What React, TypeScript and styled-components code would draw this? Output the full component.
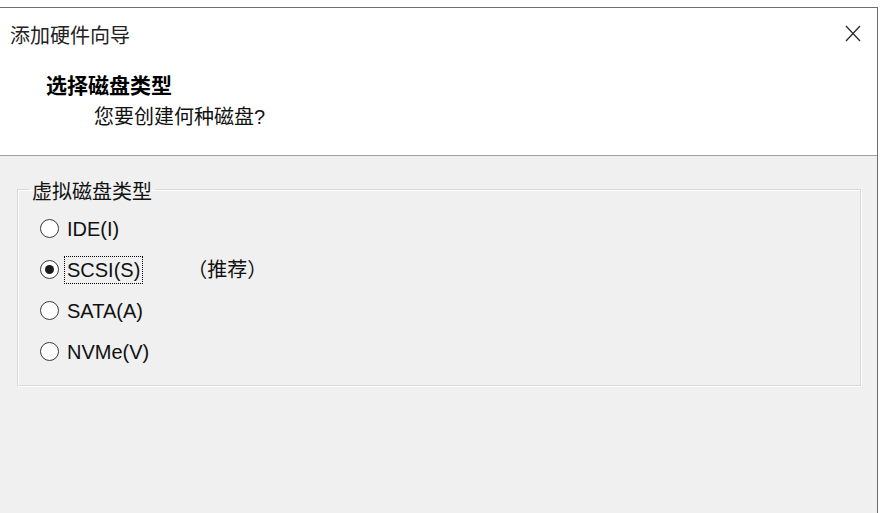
import styled, { createGlobalStyle } from 'styled-components';

const GlobalStyle = createGlobalStyle`
  html, body {
    margin: 0;
    padding: 0;
    background: #ffffff;
  }
  * {
    box-sizing: border-box;
  }
`;

type DiskType = {
  id: string;
  label: string;
  note?: string;
};

const diskTypes: DiskType[] = [
  { id: 'ide', label: 'IDE(I)' },
  { id: 'scsi', label: 'SCSI(S)', note: '（推荐）' },
  { id: 'sata', label: 'SATA(A)' },
  { id: 'nvme', label: 'NVMe(V)' },
];

const selected = 'scsi';

const CloseIcon = () => (
  <svg width='16' height='17' viewBox='0 0 16 17' fill='none'>
    <path d='M1 1 L15 16 M15 1 L1 16' stroke='#2b2b2b' strokeWidth='1.3' />
  </svg>
);

export default function App() {
  return (
    <>
      <GlobalStyle />
      <Page>
        <Dialog>
          <Header>
            <TitleBar>
              <Title>添加硬件向导</Title>
              <CloseButton aria-label='关闭'>
                <CloseIcon />
              </CloseButton>
            </TitleBar>
            <Heading>选择磁盘类型</Heading>
            <SubHeading>您要创建何种磁盘?</SubHeading>
          </Header>
          <Body>
            <Group>
              <Legend>虚拟磁盘类型</Legend>
              <Options>
                {diskTypes.map((t) => (
                  <OptionRow key={t.id}>
                    <RadioCircle $checked={t.id === selected} />
                    <OptionLabel $focused={t.id === selected}>{t.label}</OptionLabel>
                    {t.note && <Note>{t.note}</Note>}
                  </OptionRow>
                ))}
              </Options>
            </Group>
          </Body>
        </Dialog>
      </Page>
    </>
  );
}

const Page = styled.div`
  width: 882px;
  height: 513px;
  padding: 7px 4px 0 0;
  background: #ffffff;
  font-family: 'Liberation Sans', 'Noto Sans CJK SC', sans-serif;
  color: #111111;
  overflow: hidden;
`;

const Dialog = styled.div`
  display: flex;
  flex-direction: column;
  height: 100%;
  border-top: 1px solid #6e6e6e;
  border-right: 1px solid #6e6e6e;
`;

const Header = styled.div`
  height: 148px;
  background: #ffffff;
  border-bottom: 1px solid #a0a0a0;
  box-shadow: 0 1px 0 #ffffff;
`;

const TitleBar = styled.div`
  display: flex;
  align-items: center;
  justify-content: space-between;
  height: 56px;
  padding: 0 16px 0 10px;
`;

const Title = styled.div`
  font-size: 20px;
  line-height: 24px;
  color: #222222;
`;

const CloseButton = styled.button`
  display: flex;
  padding: 0;
  margin-top: -6px;
  border: none;
  background: transparent;
`;

const Heading = styled.div`
  margin: 9px 0 0 46px;
  font-size: 21px;
  line-height: 26px;
  font-weight: 700;
  color: #000000;
`;

const SubHeading = styled.div`
  margin: 5px 0 0 94px;
  font-size: 20px;
  line-height: 26px;
  color: #111111;
`;

const Body = styled.div`
  flex: 1;
  background: #f0f0f0;
  padding: 20px 16px 0 17px;
`;

const Group = styled.fieldset`
  margin: 0;
  padding: 0 0 13px 0;
  border: 1px solid #d8d8d8;
  box-shadow: inset 1px 1px 0 #ffffff, 1px 1px 0 #ffffff;
`;

const Legend = styled.legend`
  margin-left: 11px;
  padding: 6px 3px 0;
  font-size: 20px;
  line-height: 20px;
  color: #111111;
`;

const Options = styled.div`
  display: flex;
  flex-direction: column;
  margin-top: 6px;
`;

const OptionRow = styled.div`
  display: flex;
  align-items: center;
  height: 41px;
  padding-left: 22px;
`;

const RadioCircle = styled.span<{ $checked: boolean }>`
  display: flex;
  align-items: center;
  justify-content: center;
  width: 19px;
  height: 19px;
  border: 1px solid #3a3a3a;
  border-radius: 50%;
  background: #ffffff;

  &::after {
    content: '';
    display: ${({ $checked }) => ($checked ? 'block' : 'none')};
    width: 9px;
    height: 9px;
    border-radius: 50%;
    background: #1a1a1a;
  }
`;

const OptionLabel = styled.span<{ $focused: boolean }>`
  margin-left: 5px;
  padding: 1px 2px;
  border: 1px dotted ${({ $focused }) => ($focused ? '#000000' : 'transparent')};
  font-size: 20px;
  line-height: 24px;
  color: #111111;
`;

const Note = styled.span`
  margin-left: 44px;
  font-size: 20px;
  line-height: 24px;
  color: #111111;
`;
